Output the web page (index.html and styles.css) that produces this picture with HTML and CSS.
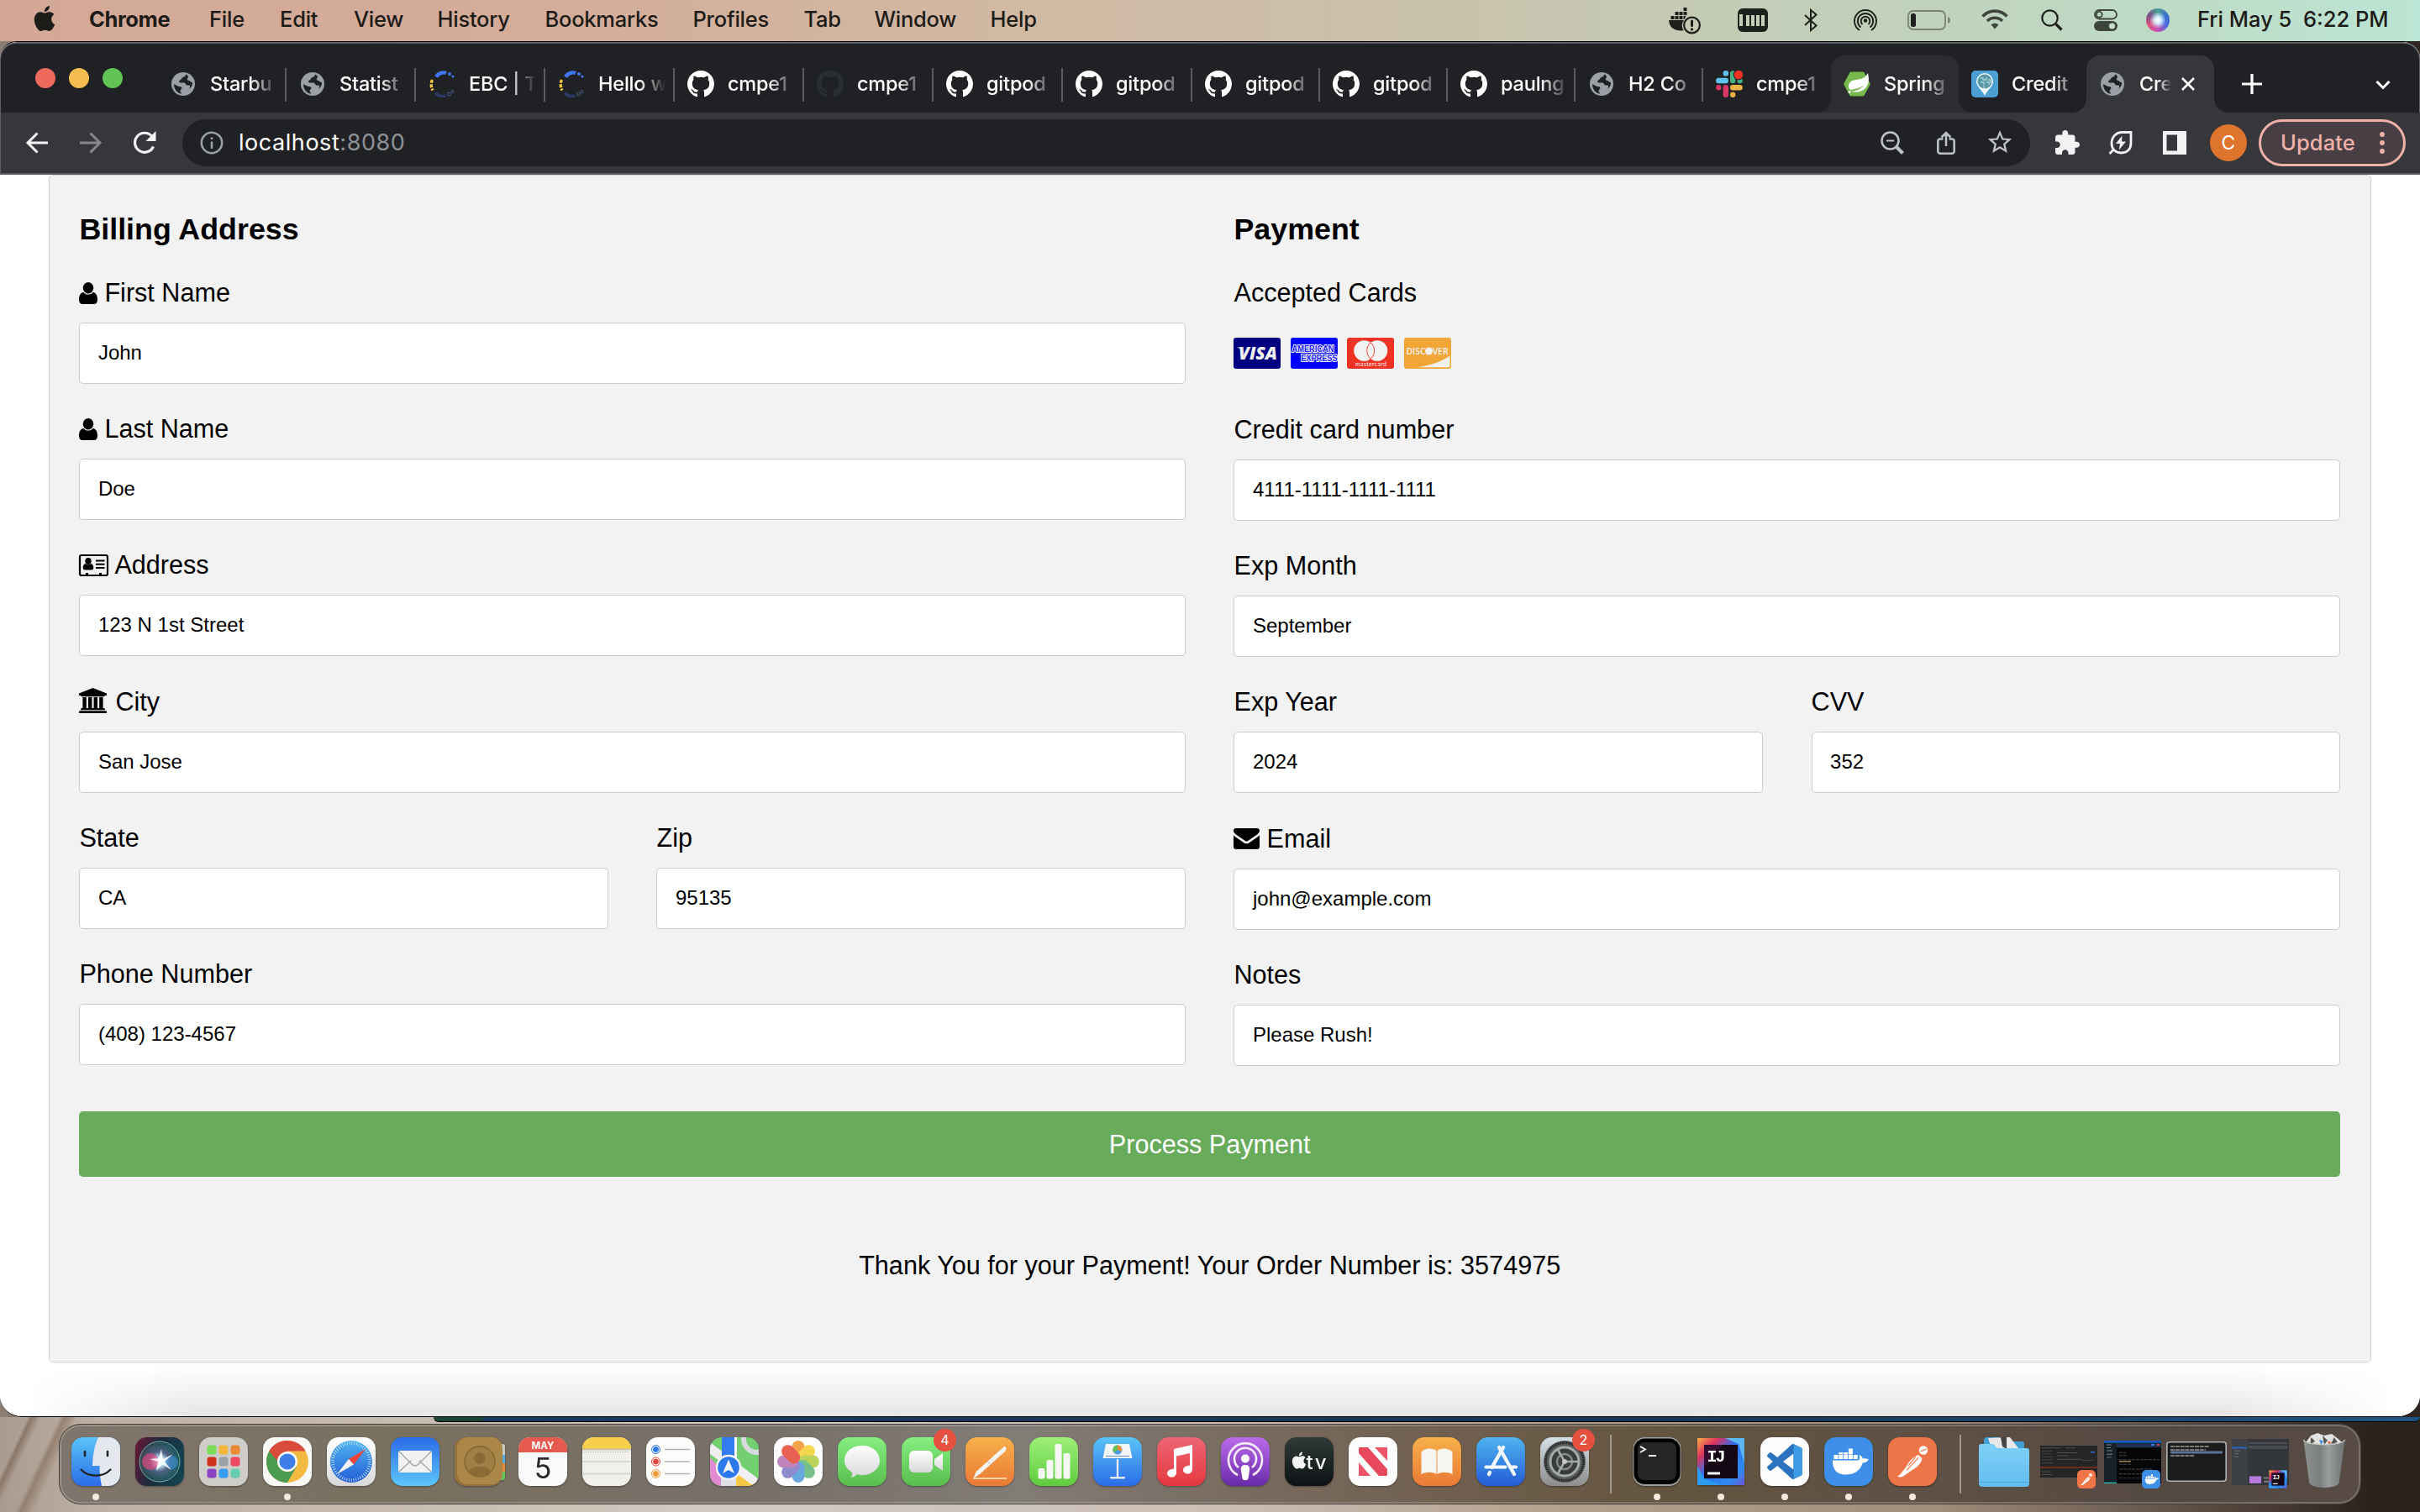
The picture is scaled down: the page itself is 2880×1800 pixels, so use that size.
FILE: index.html
```html
<!DOCTYPE html>
<html lang="en">
<head>
<meta charset="utf-8">
<title>Credit Card Payment</title>
<link rel="stylesheet" href="styles.css">
</head>
<body>
<svg class="defs" width="0" height="0" aria-hidden="true">
  <defs>
    <linearGradient id="g-blue" x1="0" y1="0" x2="0" y2="1"><stop offset="0" stop-color="#5ac4f8"/><stop offset="1" stop-color="#2a6be8"/></linearGradient>
    <linearGradient id="g-mail" x1="0" y1="0" x2="0" y2="1"><stop offset="0" stop-color="#2b6be8"/><stop offset="1" stop-color="#5cc6fa"/></linearGradient>
    <linearGradient id="g-white" x1="0" y1="0" x2="0" y2="1"><stop offset="0" stop-color="#fff"/><stop offset="1" stop-color="#d8d8da"/></linearGradient>
    <linearGradient id="g-green" x1="0" y1="0" x2="0" y2="1"><stop offset="0" stop-color="#86ee82"/><stop offset="1" stop-color="#58bd4d"/></linearGradient>
    <linearGradient id="g-lime" x1="0" y1="0" x2="0" y2="1"><stop offset="0" stop-color="#9df078"/><stop offset="1" stop-color="#5fcb3f"/></linearGradient>
    <linearGradient id="g-orange" x1="0" y1="0" x2="0" y2="1"><stop offset="0" stop-color="#f6b04a"/><stop offset="1" stop-color="#ea7a35"/></linearGradient>
    <linearGradient id="g-red" x1="0" y1="0" x2="0" y2="1"><stop offset="0" stop-color="#ee6675"/><stop offset="1" stop-color="#e5383f"/></linearGradient>
    <linearGradient id="g-purple" x1="0" y1="0" x2="0" y2="1"><stop offset="0" stop-color="#ba6bea"/><stop offset="1" stop-color="#692ba8"/></linearGradient>
    <linearGradient id="g-dark" x1="0" y1="0" x2="0" y2="1"><stop offset="0" stop-color="#2f3b38"/><stop offset="1" stop-color="#0d1113"/></linearGradient>
    <linearGradient id="g-store" x1="0" y1="0" x2="0" y2="1"><stop offset="0" stop-color="#4fb4f0"/><stop offset="1" stop-color="#235cd6"/></linearGradient>
    <linearGradient id="g-grey" x1="0" y1="0" x2="0" y2="1"><stop offset="0" stop-color="#d5e0e6"/><stop offset="1" stop-color="#8d8d8b"/></linearGradient>
    <linearGradient id="g-siri" x1="0" y1="0" x2="1" y2="0.3"><stop offset="0" stop-color="#6b1634"/><stop offset=".5" stop-color="#1d2b3e"/><stop offset="1" stop-color="#15404f"/></linearGradient>
    <radialGradient id="g-orb"><stop offset="0" stop-color="#fff"/><stop offset=".22" stop-color="#bfe6f5"/><stop offset=".5" stop-color="#5d6c92" stop-opacity=".8"/><stop offset="1" stop-color="#2e7f7a" stop-opacity=".35"/></radialGradient>
    <linearGradient id="g-ij" x1="0" y1="0" x2="1" y2="1"><stop offset="0" stop-color="#fdb04a"/><stop offset=".22" stop-color="#e0355c"/><stop offset=".45" stop-color="#2f6df0"/><stop offset=".8" stop-color="#2d8bf2"/><stop offset="1" stop-color="#6b57d6"/></linearGradient>
    <linearGradient id="g-folder" x1="0" y1="0" x2="0" y2="1"><stop offset="0" stop-color="#7fd0f7"/><stop offset="1" stop-color="#62bdee"/></linearGradient>
    <linearGradient id="g-bin" x1="0" y1="0" x2="1" y2="0"><stop offset="0" stop-color="#8f9392"/><stop offset=".4" stop-color="#7a7e7d"/><stop offset=".6" stop-color="#999d9c"/><stop offset="1" stop-color="#6e7270"/></linearGradient>
  </defs>
  <symbol id="github" viewBox="0 0 16 16"><path d="M8 0C3.58 0 0 3.58 0 8c0 3.54 2.29 6.53 5.47 7.59.4.07.55-.17.55-.38 0-.19-.01-.82-.01-1.49-2.01.37-2.53-.49-2.69-.94-.09-.23-.48-.94-.82-1.13-.28-.15-.68-.52-.01-.53.63-.01 1.08.58 1.23.82.72 1.21 1.87.87 2.33.66.07-.52.28-.87.51-1.07-1.78-.2-3.64-.89-3.64-3.95 0-.87.31-1.59.82-2.15-.08-.2-.36-1.02.08-2.12 0 0 .67-.21 2.2.82.64-.18 1.32-.27 2-.27.68 0 1.36.09 2 .27 1.53-1.04 2.2-.82 2.2-.82.44 1.1.16 1.92.08 2.12.51.56.82 1.27.82 2.15 0 3.07-1.87 3.75-3.65 3.95.29.25.54.73.54 1.48 0 1.07-.01 1.93-.01 2.2 0 .21.15.46.55.38A8.013 8.013 0 0 0 16 8c0-4.42-3.58-8-8-8z"/></symbol>
  <symbol id="globe" viewBox="0 0 32 32"><circle cx="16" cy="16" r="14" fill="#9aa0a6"/><path d="M19 4.5c-.3 2.6-1.2 3-3.4 3.4-1.8.4-1.5 3-3.2 3.6-2 .6-1.400 3 .4 3h4.400c1.600 0 1.600 2.600 3.200 2.900 1.600.3 3.400-.6 3.700 1.200.2 1.400-.6 2.700-1.700 3.600 3.400-2 5.100-5.400 4.600-8.200-2 .4-2.700-2-4.600-2.200-1.800-.2-2.200-1.800-1-2.800 1.100-1 .6-3.500-2.400-4.500z" fill="#202124"/><path d="M5 16.300l4.800 2.200c1.800.8 4.400.2 4.600 2.200.2 1.700-2.200 2-1.900 3.900.2 1.200 1.400 1.400 1.500 3-4.800-.6-9-5-9-11.300z" fill="#202124"/></symbol>
  <symbol id="ring" viewBox="0 0 32 32"><path d="M9 7.500C12 2.500 17.500 1.500 21 3" fill="none" stroke="#3f76f0" stroke-width="4.400"/><circle cx="25" cy="4" r="2" fill="#3f76f0"/><circle cx="29" cy="7" r="1.600" fill="#3f76f0"/><path d="M4.500 11C2.500 15 3 20 5 23.500" fill="none" stroke="#f2c53d" stroke-width="3.400" stroke-dasharray="4 1.400"/><path d="M8.500 26.500c3 4 8 5 12 3.500" fill="none" stroke="#2b3c66" stroke-width="4"/><circle cx="24.500" cy="28" r="2" fill="none" stroke="#4a5f8c"/><circle cx="28.500" cy="25" r="1.600" fill="none" stroke="#4a5f8c"/></symbol>
  <symbol id="apple" viewBox="0 0 24 24"><path d="M12.152 6.896c-.948 0-2.415-1.078-3.960-1.040-2.040.027-3.910 1.183-4.961 3.014-2.117 3.675-.546 9.103 1.519 12.090 1.013 1.454 2.208 3.090 3.792 3.039 1.520-.065 2.090-.987 3.935-.987 1.831 0 2.350.987 3.960.948 1.637-.026 2.676-1.480 3.676-2.948 1.156-1.688 1.636-3.325 1.662-3.415-.039-.013-3.182-1.221-3.220-4.857-.026-3.040 2.480-4.494 2.597-4.559-1.429-2.090-3.623-2.324-4.390-2.376-2-.156-3.675 1.090-4.610 1.090zM15.530 3.830c.843-1.012 1.400-2.427 1.245-3.830-1.207.052-2.662.805-3.532 1.818-.78.896-1.454 2.338-1.273 3.714 1.338.104 2.715-.688 3.559-1.701"/></symbol>
  <symbol id="user" viewBox="0 0 22 26"><ellipse cx="11" cy="6.800" rx="6.300" ry="6.800"/><path d="M5.200 12c1.600 1.700 3.600 2.600 5.800 2.600s4.200-.9 5.800-2.600c3.800.4 5.200 4.700 5.200 9 0 3-1.700 5-4.200 5H4.200C1.700 26 0 24 0 21c0-4.300 1.400-8.600 5.200-9z"/></symbol>
  <symbol id="docker" viewBox="0 0 58 58"><rect width="58" height="58" rx="14" fill="#3e8fe8"/><path d="M10 27.500h31c1.300-1 1.500-4.500.500-6.500 2.500.800 3.800 2.500 4.300 4.500 2.200-.600 5-.300 7 .800-1.500 3-4 4.200-7 4.200C42.500 40 36.500 44.500 25 44.500 15 44.500 9.500 38 10 27.500z" fill="#fff"/><g fill="#fff"><rect x="11.500" y="21" width="5" height="5"/><rect x="17.300" y="21" width="5" height="5"/><rect x="23.100" y="21" width="5" height="5"/><rect x="28.900" y="21" width="5" height="5"/><rect x="34.700" y="21" width="5" height="5"/><rect x="17.300" y="18" width="5" height="2.500"/><rect x="23.100" y="18" width="5" height="2.500"/><rect x="28.900" y="13.500" width="5" height="7"/></g></symbol>
  <symbol id="postman" viewBox="0 0 58 58"><rect width="58" height="58" rx="14" fill="#ee7548"/><circle cx="42" cy="15.500" r="5.200" fill="#fff"/><path d="M36 21l4.500 4c-1 6-5 10-11 13.500L18 46.500l-3 1-4-.5 4-3.500 7-9C25 28 30 23.500 36 21z" fill="#fff"/><path d="M38.500 17l7.500-3M36 24c-3 5-8 9-14 15M33 23c-3 4-6 7-9 11" stroke="#ee7548" stroke-width="1.200" fill="none"/></symbol>
  <symbol id="intellij" viewBox="0 0 58 58"><rect x="1" y="1" width="56" height="56" fill="url(#g-ij)"/><path d="M57 1v30L50 8 34 1z" fill="#5ab7f0"/><path d="M1 57V34l8 15 20 8z" fill="#2b9cf0"/><rect x="9" y="9" width="40" height="40" fill="#150613"/><path d="M9 9h22L9 36z" fill="#3a0f38" opacity=".8"/><text x="12.500" y="29" font-family="Liberation Mono" font-weight="700" font-size="20" fill="#fff" textLength="22">IJ</text><rect x="13" y="41.500" width="15" height="3" fill="#fff"/></symbol>
</svg>

<header class="menubar">
  <svg class="apple" viewBox="0 0 24 24"><use href="#apple"/></svg>
  <nav class="menus">
    <b>Chrome</b><span>File</span><span>Edit</span><span>View</span><span>History</span><span>Bookmarks</span><span>Profiles</span><span>Tab</span><span>Window</span><span>Help</span>
  </nav>
  <div class="status">
    <svg class="s-docker" viewBox="0 0 38 32" fill="#1e201b"><path d="M0 15h18c-3 4-3 9 0 12.300C7 28 1 25 0 15z"/><path d="M2.500 10h4v4h-4zM7.500 10h4v4h-4zM12.500 10h4v4h-4zM7.500 5h4v4h-4zM12.500 5h4v4h-4zM17.500 5h4v4h-4zM17.500 0h4v4h-4zM17.500 10h3l-2 4h-1z"/><circle cx="27.500" cy="21" r="9.400" fill="none" stroke="#1e201b" stroke-width="2.200"/><rect x="26" y="14.500" width="3" height="8.500" rx="1.500"/><circle cx="27.500" cy="26" r="1.700"/></svg>
    <svg class="s-mem" viewBox="0 0 36 28"><rect width="36" height="28" rx="6" fill="#1e201b"/><path d="M2 7h4v14H2zM10 8h4v13h-4zM16 8h4v13h-4zM22 8h4v13h-4zM28 8h4v13h-4z" fill="#c3cfb9"/></svg>
    <svg class="s-bt" viewBox="0 0 16 26" fill="none" stroke="#1e201b" stroke-width="2"><path d="M1 7l13.500 12.500L8 25V1l6.500 5.500L1 19"/></svg>
    <svg class="s-air" viewBox="0 0 28 28" fill="none" stroke="#1e201b" stroke-width="1.900"><circle cx="14" cy="14.500" r="2.300" fill="#1e201b" stroke="none"/><path d="M10.500 19a5.300 5.300 0 1 1 7 0M8.500 22.500a9.200 9.200 0 1 1 11 0M7 26a13 13 0 1 1 14 0"/></svg>
    <svg class="s-bat" viewBox="0 0 52 24"><rect x="1" y="1" width="44" height="22" rx="6" fill="none" stroke="#7b8576" stroke-width="1.800"/><rect x="4" y="4" width="6" height="16" rx="2.500" fill="#1e201b"/><path d="M48 8c4 1.500 4 6.500 0 8z" fill="#7b8576"/></svg>
    <svg class="s-wifi" viewBox="0 0 32 24" fill="none" stroke="#3e453d" stroke-width="3.600"><path d="M1.500 8.500C9.500 0 22.500 0 30.500 8.500M7 14c5-5 13-5 18 0"/><path d="M11.500 18.500c2.500-2.400 6.500-2.400 9 0L16 23.500z" fill="#3e453d" stroke="none"/></svg>
    <svg class="s-find" viewBox="0 0 26 26" fill="none" stroke="#1e201b"><circle cx="10.500" cy="10.500" r="9.200" stroke-width="2.200"/><path d="M17.500 17.500l7 7" stroke-width="3.200"/></svg>
    <svg class="s-cc" viewBox="0 0 28 26"><rect x="1" y="1" width="26" height="10.500" rx="5.200" fill="none" stroke="#3e453d" stroke-width="1.800"/><circle cx="6.300" cy="6.200" r="3.400" fill="none" stroke="#3e453d" stroke-width="1.800"/><rect y="14" width="28" height="12" rx="6" fill="#3e453d"/><circle cx="21.500" cy="20" r="3.600" fill="#bfdcc6"/></svg>
    <span class="s-siri"></span>
    <span class="clock">Fri May 5&nbsp; 6:22 PM</span>
  </div>
</header>

<main class="window">
  <div class="tabstrip">
    <div class="lights"><i class="red"></i><i class="yellow"></i><i class="green"></i></div>
    <div class="tabs">
      <div class="tab"><svg><use href="#globe"/></svg><span>Starbu</span></div>
      <div class="tab"><svg><use href="#globe"/></svg><span>Statist</span></div>
      <div class="tab"><svg><use href="#ring"/></svg><span>EBC | T</span></div>
      <div class="tab"><svg><use href="#ring"/></svg><span>Hello w</span></div>
      <div class="tab"><svg><use href="#github"/></svg><span>cmpe1</span></div>
      <div class="tab dim"><svg><use href="#github"/></svg><span>cmpe1</span></div>
      <div class="tab"><svg><use href="#github"/></svg><span>gitpod</span></div>
      <div class="tab"><svg><use href="#github"/></svg><span>gitpod</span></div>
      <div class="tab"><svg><use href="#github"/></svg><span>gitpod</span></div>
      <div class="tab"><svg><use href="#github"/></svg><span>gitpod</span></div>
      <div class="tab"><svg><use href="#github"/></svg><span>paulng</span></div>
      <div class="tab"><svg><use href="#globe"/></svg><span>H2 Co</span></div>
      <div class="tab plain"><svg viewBox="0 0 32 32"><g stroke-linecap="round" stroke-width="6.400"><path d="M3.300 12h8.500" stroke="#5fc3ee"/><path d="M11.800 3.300v.1" stroke="#5fc3ee"/><path d="M20.200 3.500v8.500M28.600 12v.1" stroke="#45b183"/><path d="M3.300 20.200v.1M11.800 20.200v8.500" stroke="#d63865"/><path d="M20.200 20.200h8.400M20.200 28.600v.1" stroke="#eab344"/></g><circle cx="27" cy="5" r="6.300" fill="#202124"/><circle cx="27" cy="5" r="5.200" fill="#ee3324"/></svg><span>cmpe1</span></div>
      <div class="tab hover"><svg viewBox="0 0 32 32"><path d="M9 1.500h14a2 2 0 0 1 1.700 1L31.500 15a2 2 0 0 1 0 2l-6.800 12.500a2 2 0 0 1-1.700 1H9a2 2 0 0 1-1.700-1L.5 17a2 2 0 0 1 0-2L7.300 2.500a2 2 0 0 1 1.700-1z" fill="#77b84f"/><path d="M29 3c1.800 8 1 14-3.500 18.500C20 27 12 25.500 7.500 25c8-.5 13.500-3 17-8C19 21.500 13 22 8 23 4 19 6 13 12 11.500 18 10 25 11 29 3z" fill="#fff"/><circle cx="7" cy="25.500" r="1.500" fill="#fff"/></svg><span>Spring</span></div>
      <div class="tab plain"><svg viewBox="0 0 32 32"><rect width="32" height="32" rx="5" fill="#4c9fd2"/><path d="M16 3a10 10 0 0 1 10 10c0 6-7 10-10 17C13 23 6 19 6 13A10 10 0 0 1 16 3z" fill="#f2fafc"/><circle cx="16" cy="13" r="8.500" fill="#5a9aa8"/><path d="M11 9h3v2h4V8m2 3h3v4m-12-1h4v3m3-3h3v3m-6 1v3" fill="none" stroke="#a7d3d6" stroke-width="1.300"/></svg><span>Credit</span></div>
      <div class="tab active"><svg><use href="#globe"/></svg><span>Cre</span><svg class="x" viewBox="0 0 16 16"><path d="M1 1l14 14M15 1L1 15" stroke="#fff" stroke-width="2.600"/></svg></div>
    </div>
    <svg class="plus" viewBox="0 0 24 24"><path d="M12 0v24M0 12h24" stroke="#fff" stroke-width="3.200"/></svg>
    <svg class="chev" viewBox="0 0 18 12"><path d="M1.500 2L9 9.500 16.500 2" fill="none" stroke="#fff" stroke-width="3"/></svg>
  </div>

  <div class="toolbar">
    <svg class="t-back" viewBox="0 0 26 26" fill="none" stroke="#f1f3f4" stroke-width="3"><path d="M26 13H2M13.500 1.500L2 13l11.500 11.500"/></svg>
    <svg class="t-fwd" viewBox="0 0 26 26" fill="none" stroke="#85878a" stroke-width="3"><path d="M0 13h24M12.500 1.500L24 13 12.500 24.500"/></svg>
    <svg class="t-reload" viewBox="0 0 28 28"><path d="M24.500 18.500A11.500 11.500 0 1 1 22.500 6" fill="none" stroke="#f1f3f4" stroke-width="3.200"/><path d="M27.500 0v12h-12z" fill="#f1f3f4"/></svg>
    <div class="omnibox">
      <svg class="o-info" viewBox="0 0 28 28"><circle cx="14" cy="14" r="12.200" fill="none" stroke="#9aa0a6" stroke-width="2.600"/><path d="M12.700 12.500h2.600V21h-2.600zM12.700 7.500h2.600v2.600h-2.600z" fill="#9aa0a6"/></svg>
      <span class="url">localhost<em>:8080</em></span>
      <svg class="o-zoom" viewBox="0 0 28 28" fill="none" stroke="#bdc1c6"><circle cx="11.500" cy="11.500" r="10" stroke-width="2.600"/><path d="M19 19l7.500 7.500" stroke-width="4"/><path d="M7 11.500h9" stroke-width="2"/></svg>
      <svg class="o-share" viewBox="0 0 22 28" fill="none" stroke="#bdc1c6" stroke-width="2.600"><path d="M7.500 9.500H4a2.700 2.700 0 0 0-2.700 2.500v12A2.700 2.700 0 0 0 4 26.700h14a2.700 2.700 0 0 0 2.700-2.700V12A2.700 2.700 0 0 0 18 9.500h-3.500M11 18V2.500M5.500 7.500L11 2l5.500 5.500"/></svg>
      <svg class="o-star" viewBox="1.500 1.500 21 20" fill="#bdc1c6"><path d="M22 9.240l-7.190-.620L12 2 9.190 8.630 2 9.240l5.460 4.730L5.820 21 12 17.270 18.180 21l-1.630-7.030L22 9.240zM12 15.400l-3.760 2.270 1-4.280-3.320-2.880 4.380-.380L12 6.100l1.710 4.040 4.380.380-3.320 2.880 1 4.280L12 15.400z"/></svg>
    </div>
    <svg class="t-ext" viewBox="2 1 21 21" fill="#f1f3f4"><path d="M20.500 11H19V7c0-1.100-.9-2-2-2h-4V3.500C13 2.120 11.880 1 10.500 1S8 2.120 8 3.500V5H4c-1.100 0-1.990.9-1.990 2v3.800H3.500c1.490 0 2.700 1.210 2.700 2.700s-1.210 2.700-2.700 2.700H2V20c0 1.100.9 2 2 2h3.800v-1.500c0-1.490 1.210-2.700 2.700-2.700 1.490 0 2.700 1.210 2.700 2.700V22H17c1.100 0 2-.9 2-2v-4h1.500c1.380 0 2.500-1.120 2.500-2.500S21.880 11 20.500 11z"/></svg>
    <svg class="t-leaf" viewBox="0 0 28 28" fill="none" stroke="#f1f3f4" stroke-width="2.800"><path d="M26.500 1.500v13c0 7-4.500 11.500-11.500 11.500S3.500 21.500 3.500 14.500 8.500 1.500 16 1.500zM1 27l5.500-5.500"/><path d="M16 5.500L8.500 15h5l-1.200 7.500L20.500 12.500h-5z" fill="#f1f3f4" stroke="none"/></svg>
    <svg class="t-panel" viewBox="0 0 28 28"><path d="M0 0h28v28H0zM4.500 4.500v19H17v-19z" fill="#f1f3f4" fill-rule="evenodd"/></svg>
    <span class="avatar">C</span>
    <span class="update">Update<svg viewBox="0 0 6 26"><circle cx="3" cy="3" r="2.900"/><circle cx="3" cy="13" r="2.900"/><circle cx="3" cy="23" r="2.900"/></svg></span>
  </div>

  <div class="page">
    <form class="container">
      <div class="row">
        <section class="col">
          <h3>Billing Address</h3>
          <div class="group"><label><svg class="i-user"><use href="#user"/></svg>First Name</label><div class="input">John</div></div>
          <div class="group"><label><svg class="i-user"><use href="#user"/></svg>Last Name</label><div class="input">Doe</div></div>
          <div class="group"><label><svg class="i-card" viewBox="0 0 35 26"><rect x="1" y="1" width="33" height="24" rx="2" fill="none" stroke="#000" stroke-width="2.200"/><ellipse cx="11" cy="8" rx="3.700" ry="4"/><path d="M7.500 11c2.200 1.800 4.800 1.800 7 0 2 .7 2.800 2.800 2.800 5 0 1.600-.9 2.500-2.400 2.500H7.100c-1.500 0-2.400-.9-2.400-2.500 0-2.200.8-4.300 2.800-5zM20 6.500h10.500v2H20zM20 10.800h10.500v2H20zM20 15h10.500v2H20zM8 22h3v3H8zM24 22h3v3h-3z"/></svg>Address</label><div class="input">123 N 1st Street</div></div>
          <div class="group"><label><svg class="i-bank" viewBox="0 0 33 30"><path d="M16.500 0L33 6.500V9h-2.200c0 .7-.5 1.200-1.200 1.200H3.400c-.7 0-1.200-.5-1.200-1.200H0V6.500zM4.400 11h4.400v13h2.200V11h4.400v13h2.200V11H22v13h2.200V11h4.400v13h1c.7 0 1.200.5 1.200 1.200v1H2.200v-1c0-.7.5-1.200 1.200-1.200h1zM1.200 27.300h30.600c.7 0 1.200.5 1.200 1.200V30H0v-1.500c0-.7.5-1.200 1.200-1.200z"/></svg>City</label><div class="input">San Jose</div></div>
          <div class="pair">
            <div class="group"><label>State</label><div class="input">CA</div></div>
            <div class="group"><label>Zip</label><div class="input">95135</div></div>
          </div>
          <div class="group"><label>Phone Number</label><div class="input">(408) 123-4567</div></div>
        </section>
        <section class="col">
          <h3>Payment</h3>
          <div class="accepted">
            <label>Accepted Cards</label>
            <div class="cards">
              <svg viewBox="0 0 56 37"><rect width="56" height="37" rx="3" fill="#000080"/><path d="M4 11.500h5l4 9-2-6z" fill="#f2f2f2"/><text x="6" y="26" font-family="Open Sans" font-weight="800" font-style="italic" font-size="20.500" fill="#f2f2f2" textLength="46" lengthAdjust="spacingAndGlyphs">VISA</text></svg>
              <svg viewBox="0 0 56 37"><rect width="56" height="37" rx="3" fill="#0000ff"/><g font-family="Liberation Sans" font-weight="700" font-size="10.500" fill="#1a1aff" stroke="#f2f2f2" stroke-width="2.200" paint-order="stroke"><text x="1.500" y="16.800" textLength="50" lengthAdjust="spacingAndGlyphs">AMERICAN</text><text x="12.500" y="28" textLength="43" lengthAdjust="spacingAndGlyphs">EXPRESS</text></g></svg>
              <svg viewBox="0 0 56 37"><rect width="56" height="37" rx="3" fill="#ee3224"/><circle cx="20.500" cy="15.500" r="12.300" fill="#f2f2f2"/><circle cx="36" cy="15.500" r="12.300" fill="#f2f2f2"/><path d="M28.200 6a12.300 12.300 0 0 0 0 19 12.300 12.300 0 0 0 0-19z" fill="#f2f2f2" stroke="#ee3224" stroke-width=".9"/><text x="10" y="34" font-family="Lato" font-size="7" fill="#f2f2f2" textLength="37">mastercard</text></svg>
              <svg viewBox="0 0 56 37"><rect width="56" height="37" rx="3" fill="#f2a638"/><text x="2.500" y="20" font-family="Open Sans" font-weight="600" font-size="11" fill="#f2f2f2" textLength="50" lengthAdjust="spacingAndGlyphs">DISCOVER</text><circle cx="29.500" cy="16" r="4.500" fill="#f2f2f2"/><path d="M54.500 21.500v12a1.700 1.700 0 0 1-1.700 1.700H16C32 33 46 28 54.500 21.500z" fill="#f2f2f2"/></svg>
            </div>
          </div>
          <div class="group"><label>Credit card number</label><div class="input">4111-1111-1111-1111</div></div>
          <div class="group"><label>Exp Month</label><div class="input">September</div></div>
          <div class="pair">
            <div class="group"><label>Exp Year</label><div class="input">2024</div></div>
            <div class="group"><label>CVV</label><div class="input">352</div></div>
          </div>
          <div class="group"><label><svg class="i-mail" viewBox="0 0 31 25"><path d="M3 0h25c1.700 0 3 1.200 3 2.800 0 2-1.500 3.700-3 4.700l-9 6.300c-1.200.8-2.300 1.800-3.500 1.800s-2.300-1-3.500-1.800L3 7.500C1.600 6.500 0 4.600 0 3 0 1.300 1.200 0 3 0z"/><path d="M0 8.300c.5.600 1.100 1.100 1.800 1.600l9.400 6.500c1.400 1 2.700 1.900 4.300 1.900s2.900-.9 4.300-1.900l9.400-6.500c.7-.5 1.300-1 1.800-1.600V22c0 1.700-1.300 3-3 3H3c-1.700 0-3-1.300-3-3z"/></svg>Email</label><div class="input">john@example.com</div></div>
          <div class="group"><label>Notes</label><div class="input">Please Rush!</div></div>
        </section>
      </div>
      <button type="button" class="btn">Process Payment</button>
      <p class="message">Thank You for your Payment! Your Order Number is: 3574975</p>
    </form>
  </div>
</main>

<footer class="desk">
  <div class="behind"></div>
  <div class="dock">
    <div class="app on"><svg viewBox="0 0 58 58"><rect width="58" height="58" rx="14" fill="url(#g-blue)"/><path d="M32 0h12a14 14 0 0 1 14 14v30a14 14 0 0 1-14 14h-8c-1.500-7-2.500-15-2.500-24H25C25.500 20 28 8 32 0z" fill="#e4e8ee"/><path d="M16 17v5M43 17v5" stroke="#222" stroke-width="2.600" stroke-linecap="round"/><path d="M11.500 38.500c9 9.500 26 9.500 35 0" stroke="#222" stroke-width="2.200" fill="none" stroke-linecap="round"/></svg></div>
    <div class="app"><svg viewBox="0 0 58 58"><rect width="58" height="58" rx="14" fill="url(#g-siri)"/><circle cx="29" cy="29" r="24" fill="url(#g-orb)" stroke="#6fae9f" stroke-width="1"/><circle cx="18" cy="29" r="10" fill="#e8487f" opacity=".65"/><circle cx="43" cy="30" r="8" fill="#3b9be0" opacity=".55"/><path d="M31 14l2 12 12-6-10 9 8 10-11-7-7 8 2-11-10-3 11-1z" fill="#fff" opacity=".85"/></svg></div>
    <div class="app"><svg viewBox="0 0 58 58"><rect width="58" height="58" rx="14" fill="#cfcdca"/><rect x="9.500" y="9.500" width="11" height="11" rx="3" fill="#7bdc57"/><rect x="23.500" y="9.500" width="11" height="11" rx="3" fill="#f2b93c"/><rect x="37.500" y="9.500" width="11" height="11" rx="3" fill="#ea8b34"/><rect x="9.500" y="23.500" width="11" height="11" rx="3" fill="#d0311f"/><rect x="23.500" y="23.500" width="11" height="11" rx="3" fill="#9aa2a5"/><rect x="37.500" y="23.500" width="11" height="11" rx="3" fill="#ee4760"/><rect x="9.500" y="37.500" width="11" height="11" rx="3" fill="#8a45c2"/><rect x="23.500" y="37.500" width="11" height="11" rx="3" fill="#389cf0"/><rect x="37.500" y="37.500" width="11" height="11" rx="3" fill="#66cdb0"/></svg></div>
    <div class="app on"><svg viewBox="0 0 58 58"><rect width="58" height="58" rx="14" fill="#f8f8f7"/><circle cx="29" cy="29" r="25" fill="#f3ba42"/><path d="M7.350 16.500A25 25 0 0 1 50.650 16.500H29z" fill="#d84b3d"/><path d="M7.350 16.500A25 25 0 0 0 29 54l11-19L18.500 35z" fill="#4b9b52"/><path d="M7.350 16.500L18.200 35.300 29 29V16.500z" fill="#4b9b52"/><path d="M7.350 16.500A25 25 0 0 1 29 4v12.500L18 29z" fill="#d84b3d"/><circle cx="29" cy="29" r="12" fill="#fff"/><circle cx="29" cy="29" r="9.600" fill="#3f7de8"/></svg></div>
    <div class="app"><svg viewBox="0 0 58 58"><rect width="58" height="58" rx="14" fill="url(#g-white)"/><circle cx="29" cy="29" r="25" fill="url(#g-store)"/><circle cx="29" cy="29" r="22" fill="none" stroke="#cfe6fb" stroke-width="3.600" stroke-dasharray=".8 2"/><path d="M46 14L32 32.500 26 26z" fill="#ef4538"/><path d="M12 44L26 26l6 6.500z" fill="#f3f3f3"/></svg></div>
    <div class="app"><svg viewBox="0 0 58 58"><rect width="58" height="58" rx="14" fill="url(#g-mail)"/><rect x="9" y="16" width="40" height="26" rx="3" fill="#f1f1f1"/><path d="M10 41l14-13M48 41L34 28M10 17l15 15c2.500 2.500 5.500 2.500 8 0l15-15" fill="none" stroke="#a5a5a5" stroke-width="1.300"/></svg></div>
    <div class="app"><svg viewBox="0 0 58 58"><path d="M52 8h5a3 3 0 0 1 3 3v10h-8z" fill="#c9c9c6"/><path d="M52 21h8v10h-8z" fill="#4fa9e0"/><path d="M52 31h8v10h-8z" fill="#e78a33"/><path d="M52 41h8v7a3 3 0 0 1-3 3h-5z" fill="#63c65a"/><rect width="56" height="58" rx="13" fill="#93713b"/><rect x="3" width="54" height="56" rx="13" fill="#aa8749"/><circle cx="30" cy="29" r="18" fill="#a17f44" stroke="#84642f" stroke-width="1.300"/><ellipse cx="30" cy="25" rx="6.500" ry="7" fill="#8b6a35"/><path d="M17 41c2-8 24-8 26 0-6 7-20 7-26 0z" fill="#8b6a35"/></svg></div>
    <div class="app"><svg viewBox="0 0 58 58"><rect width="58" height="58" rx="14" fill="#fafafa"/><path d="M14 0h30a14 14 0 0 1 14 14v4H0v-4A14 14 0 0 1 14 0z" fill="#e5594e"/><text x="29" y="13.500" text-anchor="middle" font-family="Inter" font-weight="700" font-size="11.500" fill="#fff">MAY</text><text x="29" y="48.500" text-anchor="middle" font-family="Inter" font-size="34" fill="#2a2a2a">5</text></svg></div>
    <div class="app"><svg viewBox="0 0 58 58"><rect width="58" height="58" rx="14" fill="#f1f0ec"/><path d="M14 0h30a14 14 0 0 1 14 14H0A14 14 0 0 1 14 0z" fill="#f7cf4a"/><path d="M0 14.500h58" stroke="#bdbab2" stroke-width="1.400"/><path d="M1 17.500h56" stroke="#b9b6b0" stroke-width="1.200" stroke-dasharray="1 1"/><path d="M0 29h58M0 43.500h58" stroke="#d0d0d2" stroke-width="1.300"/></svg></div>
    <div class="app"><svg viewBox="0 0 58 58"><rect width="58" height="58" rx="14" fill="#fcfcfb"/><path d="M22 14.500h30M22 29h30M22 43.500h30" stroke="#b4b4b6" stroke-width="1.300"/><g stroke="#fff" stroke-width="1"><circle cx="11.500" cy="14.500" r="4" fill="#2d78ea"/><circle cx="11.500" cy="29" r="4" fill="#e5483e"/><circle cx="11.500" cy="43.500" r="4" fill="#ef9a37"/></g><g fill="none" stroke-width="1"><circle cx="11.500" cy="14.500" r="5" stroke="#2d78ea"/><circle cx="11.500" cy="29" r="5" stroke="#e5483e"/><circle cx="11.500" cy="43.500" r="5" stroke="#ef9a37"/></g></svg></div>
    <div class="app"><svg viewBox="0 0 58 58"><clipPath id="c-map"><rect width="58" height="58" rx="14"/></clipPath><g clip-path="url(#c-map)"><rect width="58" height="58" fill="#74cf71"/><path d="M0 24l32 34H0z" fill="#e08bd0"/><path d="M30 30l28 24v4H28z" fill="#f5c945"/><path d="M0 6l58 44v8h-6L0 20z" fill="#f0f0f2"/><rect x="13" y="30" width="18" height="28" fill="#dfe0e6"/><rect x="14" width="15" height="30" fill="#347df0"/><path d="M29 0h3v28h-3z" fill="#fff"/><circle cx="56" cy="2" r="16" fill="none" stroke="#d9dade" stroke-width="6"/></g><circle cx="22" cy="36" r="14" fill="#2d78ea" stroke="#f3f3f5" stroke-width="2.400"/><path d="M22 26.500l7 16.500-7-4-7 4z" fill="#f3f3f5"/></svg></div>
    <div class="app"><svg viewBox="0 0 58 58"><rect width="58" height="58" rx="14" fill="#fdfdfd"/><g opacity=".9"><rect x="21.500" y="4" width="15" height="25" rx="7.500" fill="#f19a37"/><rect x="21.500" y="4" width="15" height="25" rx="7.500" fill="#f4d23c" transform="rotate(45 29 29)"/><rect x="21.500" y="4" width="15" height="25" rx="7.500" fill="#b5cf4a" transform="rotate(90 29 29)"/><rect x="21.500" y="4" width="15" height="25" rx="7.500" fill="#69ba7e" transform="rotate(135 29 29)"/><rect x="21.500" y="4" width="15" height="25" rx="7.500" fill="#5a9fdc" transform="rotate(180 29 29)"/><rect x="21.500" y="4" width="15" height="25" rx="7.500" fill="#8080c8" transform="rotate(225 29 29)"/><rect x="21.500" y="4" width="15" height="25" rx="7.500" fill="#b877b4" transform="rotate(270 29 29)"/><rect x="21.500" y="4" width="15" height="25" rx="7.500" fill="#e6503f" transform="rotate(315 29 29)"/></g></svg></div>
    <div class="app"><svg viewBox="0 0 58 58"><rect width="58" height="58" rx="14" fill="url(#g-green)"/><path d="M29 10c12 0 21 7.500 21 17.500S41 45 29 45c-2.500 0-4.500-.3-6.500-.8-1.500 2-3.500 3.300-7 3.800 1.500-2 2-4 1.500-6.200C11.500 38.500 8 33.500 8 27.500 8 17.500 17 10 29 10z" fill="url(#g-white)"/></svg></div>
    <div class="app"><svg viewBox="0 0 58 58"><rect width="58" height="58" rx="14" fill="url(#g-green)"/><rect x="9" y="16" width="28" height="26" rx="6" fill="url(#g-white)"/><path d="M39 26l10-7v21l-10-7z" fill="url(#g-white)"/></svg><span class="badge">4</span></div>
    <div class="app"><svg viewBox="0 0 58 58"><rect width="58" height="58" rx="14" fill="url(#g-orange)"/><path d="M9 49h40" stroke="#fbd3a5" stroke-width="2"/><path d="M46 11c3 0 3 3 1.500 5.500L17 44l-7.500 5 3-8z" fill="#f5f3f0"/><path d="M26 29l5 4" stroke="#c9b8a8" stroke-width="1"/></svg></div>
    <div class="app"><svg viewBox="0 0 58 58"><rect width="58" height="58" rx="14" fill="url(#g-lime)"/><g fill="#f6f7f5"><rect x="10.500" y="37" width="8" height="12.500" rx="2"/><rect x="20.500" y="27" width="8" height="22.500" rx="2"/><rect x="30.500" y="8" width="8" height="41.500" rx="2"/><rect x="40.500" y="19" width="8" height="30.500" rx="2"/></g></svg></div>
    <div class="app"><svg viewBox="0 0 58 58"><rect width="58" height="58" rx="14" fill="url(#g-blue)"/><path d="M15 8h28l3.500 17h-35z" fill="#f4f5f7"/><path d="M15 22.500h28" stroke="#7c9cc8" stroke-width="1.200"/><circle cx="29" cy="15" r="5.500" fill="#4f9de6"/><path d="M29 15V9.500a5.500 5.500 0 0 1 5 7.500z" fill="#ef8b3b"/><path d="M29 15l-4.500 3.500A5.500 5.500 0 0 1 29 9.500z" fill="#62bf5a"/><path d="M27.800 26h2.400v21h-2.400z" fill="#e4e7ec"/><rect x="20" y="47" width="18" height="2.600" rx="1" fill="#e4e7ec"/></svg></div>
    <div class="app"><svg viewBox="0 0 58 58"><rect width="58" height="58" rx="14" fill="url(#g-red)"/><path d="M20 14l22-5v29c0 3.500-2.500 5.500-5.500 5.500S31 41.500 31 39s2-4.500 5-5l3-.6V19l-16 3.500V42c0 3.500-2.500 5.500-5.500 5.500S12 45.500 12 43s2-4.500 5-5l3-.6z" fill="#fff"/></svg></div>
    <div class="app"><svg viewBox="0 0 58 58"><rect width="58" height="58" rx="14" fill="url(#g-purple)"/><g fill="none" stroke="#f4eafa" stroke-width="2.600"><path d="M20 45a20 20 0 1 1 18 0M21 36a13 13 0 1 1 16 0"/></g><circle cx="29" cy="25.500" r="5" fill="#fff"/><path d="M29 33c5 0 5.500 3 5 7l-1.500 9c-.7 3-6.300 3-7 0L24 40c-.5-4 0-7 5-7z" fill="#fff"/></svg></div>
    <div class="app"><svg viewBox="0 0 58 58"><rect width="58" height="58" rx="14" fill="url(#g-dark)"/><use href="#apple" x="7" y="17" width="20" height="21" fill="#f3f3f3"/><text x="25.500" y="38" font-family="Inter" font-weight="500" font-size="24" fill="#f3f3f3" textLength="24">tv</text></svg></div>
    <div class="app"><svg viewBox="0 0 58 58"><rect width="58" height="58" rx="14" fill="#fefefe"/><path d="M12 14c0-1.500.5-2 2-2h9l23 26v6c0 1.500-.5 2-2 2h-8L12 19z" fill="#e8485c"/><path d="M31 12h15v16zM12 30l14 16H12z" fill="#ee5568"/></svg></div>
    <div class="app"><svg viewBox="0 0 58 58"><rect width="58" height="58" rx="14" fill="url(#g-orange)"/><path d="M28.500 16v28c-4-3-13-3-18 0V18c3-5.500 14-6 18-2zM29.500 16v28c4-3 13-3 18 0V18c-3-5.500-14-6-18-2z" fill="#f7f5f2"/></svg></div>
    <div class="app"><svg viewBox="0 0 58 58"><rect width="58" height="58" rx="14" fill="url(#g-store)"/><g stroke="#f3f8fd" stroke-width="4.200" stroke-linecap="round"><path d="M32 12L18.500 36M27 12l18 32M11.500 35.500h23M42 35.500h5M16 42l-1 2"/></g></svg></div>
    <div class="app"><svg viewBox="0 0 58 58"><rect width="58" height="58" rx="14" fill="url(#g-grey)"/><circle cx="29" cy="29" r="25" fill="#5b5d5e"/><circle cx="29" cy="29" r="22.500" fill="none" stroke="#1f2122" stroke-width="3" stroke-dasharray="1.500 1"/><circle cx="29" cy="29" r="17" fill="#3a3c3d" stroke="#a7aaab" stroke-width="3"/><circle cx="29" cy="29" r="9" fill="none" stroke="#85888a" stroke-width="2.500"/><path d="M29 29h17M29 29l-8.500-15M29 29l-8.500 15" stroke="#a7aaab" stroke-width="2.600"/><circle cx="29" cy="29" r="3" fill="#c2c4c5"/></svg><span class="badge">2</span></div>
    <i class="rule r1"></i>
    <div class="app on"><svg viewBox="0 0 58 58"><rect x=".5" width="57" height="58" rx="14" fill="#9aa1a3"/><rect x="1.500" y="1.500" width="55" height="54.500" rx="13" fill="#000"/><rect x="6" y="6" width="46" height="45" rx="8" fill="#262626"/><path d="M9 11l6 3.500L9 18" fill="none" stroke="#fff" stroke-width="1.800"/><path d="M19 22h9" stroke="#fff" stroke-width="1.800"/></svg></div>
    <div class="app on"><svg viewBox="0 0 58 58"><use href="#intellij"/></svg></div>
    <div class="app on"><svg viewBox="0 0 58 58"><rect width="58" height="58" rx="14" fill="#fdfdfd"/><svg x="8" y="8" width="42" height="42" viewBox="0 0 24 24"><path d="M23.150 2.587L18.210.210a1.494 1.494 0 0 0-1.705.290l-9.460 8.630-4.120-3.128a.999.999 0 0 0-1.276.057L.327 7.261A1 1 0 0 0 .326 8.740L3.899 12 .326 15.260a1 1 0 0 0 .001 1.479L1.650 17.940a.999.999 0 0 0 1.276.057l4.120-3.128 9.460 8.630a1.492 1.492 0 0 0 1.704.290l4.942-2.377A1.500 1.500 0 0 0 24 20.060V3.939a1.500 1.500 0 0 0-.850-1.352zm-5.146 14.861L10.826 12l7.178-5.448v10.896z" fill="#2a73be"/><path d="M18 .1l5.150 2.487A1.500 1.500 0 0 1 24 3.939V20.060a1.500 1.500 0 0 1-.850 1.352L18 23.900z" fill="#3f9ae5"/></svg></svg></div>
    <div class="app on"><svg viewBox="0 0 58 58"><use href="#docker"/></svg></div>
    <div class="app on"><svg viewBox="0 0 58 58"><use href="#postman"/></svg></div>
    <i class="rule r2"></i>
    <svg class="folder" viewBox="0 0 60 60"><path d="M6 6c0-3 1-5 4-5h14l5 5h22c2 0 3 1 3 3v20H6z" fill="#3f9fd6"/><path d="M11 2l26-1 10 13H15z" fill="#e8e8e8"/><path d="M26 1h7v14l-5-3z" fill="#444"/><path d="M3 9h13c3 0 4 5 7 5h34a3 3 0 0 1 3 3v39a4 4 0 0 1-4 4H4a4 4 0 0 1-4-4V12a3 3 0 0 1 3-3z" fill="url(#g-folder)"/><path d="M0 54.500h60" stroke="#4aa6dc" stroke-width="1.200"/></svg>
    <div class="mini m1"><svg viewBox="0 0 68 54" preserveAspectRatio="none"><rect width="68" height="54" fill="#252525"/><path d="M2 4h22M30 4h12M20 12h24M20 17h14M2 9h12M2 14h11M2 19h13M2 24h12M2 29h14M20 23h30M50 25h14M2 44h11M2 49h12" stroke="#4d4d4d" stroke-width="1.300"/><path d="M0 37h68" stroke="#6d2c1f" stroke-width="3"/><rect x="60" y="10" width="5" height="2" fill="#2a74d8"/></svg><svg class="tag"><use href="#postman"/></svg></div>
    <div class="mini m2"><svg viewBox="0 0 68 72" preserveAspectRatio="none"><rect width="68" height="72" fill="#050607"/><rect width="15" height="72" fill="#152029"/><path d="M15 8h53" stroke="#1f3350" stroke-width="7"/><rect width="68" height="4" fill="#1c5bc0"/><path d="M3 7h6M3 12h5M3 17h7M3 23h7M3 28h6" stroke="#7d8b96" stroke-width="1.200"/><path d="M18 20h8M18 25h9M18 32h48M18 40h14M18 48h40M18 56h36M18 63h30" stroke="#474747" stroke-width="1.300" stroke-dasharray="4 1"/><path d="M18 35h14" stroke="#d3b16b" stroke-width="1.600"/><path d="M56 7h4" stroke="#2c78e0" stroke-width="3"/><path d="M63 7h3" stroke="#d2463f" stroke-width="3"/><path d="M0 71h15" stroke="#2bb3a5" stroke-width="2"/></svg><svg class="tag"><use href="#docker"/></svg></div>
    <div class="mini m3"><svg viewBox="0 0 72 48"><rect x=".8" y=".8" width="70.400" height="46.400" rx="3" fill="#1c1c1c" stroke="#aeb5b2" stroke-width="1.600"/><path d="M5 6h46M5 10h42M5 17h28" stroke="#d8d8d8" stroke-width="1.200" stroke-dasharray="5 .8"/><path d="M5 13h62" stroke="#5b7396" stroke-width="3"/></svg></div>
    <div class="mini m4"><svg viewBox="0 0 68 78" preserveAspectRatio="none"><rect width="68" height="78" fill="#33363a"/><rect width="19" height="78" fill="#3d4145"/><path d="M20 7h46" stroke="#4b4f54" stroke-width="3"/><path d="M0 15h18" stroke="#2e62b4" stroke-width="3"/><path d="M20 14h46" stroke="#484d53" stroke-width="5"/><path d="M3 20h7M3 25h5M3 30h5" stroke="#7e8388" stroke-width="1.200"/><rect x="21" y="63" width="14" height="12" fill="#b77bdc"/><path d="M38 66h7M38 72h7" stroke="#777" stroke-width="3"/></svg><svg class="tag"><use href="#intellij"/></svg></div>
    <svg class="trash" viewBox="0 0 52 68"><path d="M4 12l6-8 8-3 8 3 9-2 8 6 6 6-6 8H10z" fill="#e3e3e0"/><path d="M10 6l5 5-6 4zM24 4l6 6-4 5zM38 6l-4 9 8-3z" fill="#555"/><path d="M20 9l5 2-3 4z" fill="#3c8ee0"/><path d="M30 11l5 1-3 3z" fill="#e0603c"/><path d="M1 9c2 8 48 8 50 0l-7 52c-1 8-35 8-36 0z" fill="url(#g-bin)"/><path d="M1 9c2 8 48 8 50 0" fill="none" stroke="#c3c6c5" stroke-width="1.400"/></svg>
  </div>
</footer>
</body>
</html>
```
FILE: styles.css
```css
* { box-sizing: border-box; }

body {
  margin: 0;
  width: 2880px;
  height: 1800px;
  overflow: hidden;
  display: flex;
  flex-direction: column;
  font-family: "Liberation Sans", Arial, sans-serif;
  background: linear-gradient(90deg, #8b7d73, #9a8c80 40%, #5b4c40 85%, #2f2622);
}

svg { display: block; flex: none; overflow: visible; }
.defs { position: absolute; }

/* System menu bar */
.menubar {
  flex: none;
  height: 49px;
  display: flex;
  align-items: center;
  padding: 0 37px 1px 38px;
  font: 500 25.5px Inter, sans-serif;
  color: #1e1c18;
  background: linear-gradient(90deg, #d3a897 0, #d4ac99 22%, #d1b9a3 42%, #cbbfa9 56%, #c5c9b3 68%, #bfd6c0 84%, #bbe5d4 100%);
}
.apple { width: 30px; height: 32px; fill: #1e1c18; margin-bottom: 4px; }
.menus {
  display: grid;
  grid-template-columns: 143px 84px 88px 99.500px 128px 176px 132px 84px 138px 80px;
  margin-left: 38px;
  margin-bottom: 3px;
  white-space: nowrap;
  letter-spacing: -.25px;
}
.menus b { font-weight: 700; letter-spacing: -.4px; }
.status { margin-left: auto; display: flex; align-items: center; }
.s-docker { width: 38px; height: 32px; margin-top: 2px; }
.s-mem { width: 36px; height: 28px; margin-left: 44px; }
.s-bt { width: 16px; height: 26px; margin-left: 43px; }
.s-air { width: 28px; height: 28px; margin-left: 43px; }
.s-bat { width: 52px; height: 24px; margin-left: 36px; }
.s-wifi { width: 32px; height: 24px; margin-left: 36px; margin-bottom: 2px; }
.s-find { width: 26px; height: 26px; margin-left: 39px; }
.s-cc { width: 28px; height: 26px; margin-left: 37px; }
.s-siri {
  width: 28px; height: 28px; border-radius: 50%; margin-left: 34px;
  background: radial-gradient(circle at 50% 50%, #fff 0, #d9f0ff 18%, transparent 50%), conic-gradient(#4aa391, #3a6fd0, #4a6ae0, #c64fb2, #e0567e, #7a4f8a, #4aa391);
}
.clock { margin-left: 33px; margin-bottom: 3px; width: 228px; white-space: pre; letter-spacing: 0; }

/* Browser window */
.window {
  flex: none;
  height: 1638px;
  display: flex;
  flex-direction: column;
  border-radius: 20px 20px 26px 26px;
  overflow: hidden;
  background: #fff;
  border-top: 1px solid #000;
  border-bottom: 1px solid #000;
}
.tabstrip {
  flex: none;
  height: 84px;
  display: flex;
  background: #202124;
  border-top: 2px solid #5c5e61;
  border-left: 1px solid #5c5e61;
  border-right: 1px solid #5c5e61;
  border-radius: 20px 20px 0 0;
}
.lights { display: flex; gap: 16px; padding: 29px 0 0 41px; width: 186px; }
.lights i { width: 24px; height: 24px; border-radius: 50%; }
.red { background: #ee6a5f; }
.yellow { background: #f5bd4f; }
.green { background: #61c454; }
.tabs { display: grid; grid-template-columns: repeat(8, 154px) repeat(8, 152px); padding-top: 14px; }
.tab {
  position: relative;
  display: flex;
  align-items: center;
  padding-left: 15px;
  height: 68px;
  fill: #fff;
  color: #fff;
  font: 500 23.500px Inter, sans-serif;
  letter-spacing: -.2px;
}
.tab::after { content: ""; position: absolute; right: 0; top: 15px; width: 2px; height: 40px; background: #5a5c60; }
.plain::after, .hover::after, .active::after { display: none; }
.tab > svg { width: 32px; height: 32px; }
.tab > span {
  margin: 0 0 2px 16px;
  width: 80px;
  white-space: nowrap;
  -webkit-mask-image: linear-gradient(90deg, #000 60%, transparent);
  mask-image: linear-gradient(90deg, #000 60%, transparent);
}
.dim > svg { fill: #2a2f34; }
.hover, .active { border-radius: 16px 16px 0 0; }
.hover { background: #2c2d31; }
.active { background: #36373b; }
.hover::before, .active::before {
  content: "";
  position: absolute;
  left: -16px; right: -16px; bottom: 0; height: 16px;
  background:
    radial-gradient(circle at 0 0, transparent 15.500px, var(--c) 16px) left / 16px 16px no-repeat,
    radial-gradient(circle at 100% 0, transparent 15.500px, var(--c) 16px) right / 16px 16px no-repeat;
}
.hover { --c: #2c2d31; }
.active { --c: #36373b; }
.active > span { width: 38px; }
.tab > .x { width: 16px; height: 16px; margin-left: 12px; }
.plus { width: 24px; height: 24px; margin: 36px 0 0 33px; }
.chev { width: 18px; height: 12px; margin: 43px 34px 0 auto; }

.toolbar {
  flex: none;
  height: 74px;
  display: flex;
  align-items: center;
  padding: 0 16px 1px 30px;
  background: #36373b;
  border-bottom: 2px solid #5c5b5f;
  border-left: 1px solid #5c5e61;
}
.t-back, .t-fwd { width: 26px; height: 26px; }
.t-fwd { margin-left: 38px; }
.t-reload { width: 28px; height: 28px; margin-left: 37px; }
.omnibox {
  width: 2199px;
  height: 56px;
  margin-left: 31px;
  padding: 0 21px 0 21px;
  border-radius: 28px;
  background: #202124;
  display: flex;
  align-items: center;
}
.o-info { width: 28px; height: 28px; }
.url { margin-left: 18px; margin-right: auto; font: 27px Inter, sans-serif; letter-spacing: .55px; color: #fff; }
.url em { font-style: normal; color: #8e9196; }
.o-zoom { width: 28px; height: 28px; }
.o-share { width: 22px; height: 28px; margin-left: 39px; }
.o-star { width: 30px; height: 29px; margin-left: 38px; margin-bottom: 2px; }
.t-ext { width: 29px; height: 29px; margin-left: 30px; }
.t-leaf { width: 29px; height: 28px; margin-left: 34px; }
.t-panel { width: 28px; height: 28px; margin-left: 36px; }
.avatar {
  width: 44px; height: 44px; border-radius: 50%; margin-left: 28px;
  background: #df742c; color: #fff; font: 23px/44px Inter, sans-serif; text-align: center;
}
.update {
  width: 175px; height: 56px; margin-left: 14px; padding: 0 22px 0 23px;
  display: flex; align-items: center; justify-content: space-between;
  border: 3px solid #efb1aa; border-radius: 28px; background: #473f43;
  font: 500 25.500px Inter, sans-serif; letter-spacing: .1px; color: #efb1aa; fill: #efb1aa;
}
.update svg { width: 6px; height: 26px; }

/* Checkout page */
.page {
  flex: 1;
  position: relative;
  padding: 0 58px;
  background: #fff;
}
.page::after {
  content: "";
  position: absolute;
  left: 0; right: 0; bottom: 0; height: 60px;
  background: linear-gradient(transparent, rgba(0, 0, 0, .1));
  -webkit-mask-image: linear-gradient(90deg, transparent 1%, #000 8%, #000 92%, transparent 99%);
  mask-image: linear-gradient(90deg, transparent 1%, #000 8%, #000 92%, transparent 99%);
}
.container {
  height: 1414px;
  padding: 45px 36px 0 35.400px;
  background: #f2f2f2;
  border: 1px solid #d0d0d0;
  border-radius: 5px;
}
.row { display: grid; grid-template-columns: 1fr 1fr; gap: 57.600px; }
h3 { margin: 0 0 37px; font-size: 35.800px; line-height: 39px; padding-bottom: 1px; }
label { display: flex; align-items: center; height: 35px; font-size: 30.600px; line-height: 35px; }
.group { margin-bottom: 36.200px; }
.input {
  margin-top: 18px;
  height: 73px;
  padding-left: 21.500px;
  border: 1px solid #ccc;
  border-radius: 5px;
  background: #fff;
  font-size: 24px;
  line-height: 70px;
}
.pair { display: grid; grid-template-columns: 1fr 1fr; gap: 57.600px; }
label svg { fill: #000; }
.i-user { width: 22px; height: 26px; margin-right: 8px; }
.i-card { width: 35px; height: 26px; margin-right: 7px; }
.i-bank { width: 33px; height: 30px; margin: -3px 10px 0 0; }
.i-mail { width: 31px; height: 25px; margin-right: 8px; }
.accepted { height: 163px; }
.cards { display: flex; gap: 11.500px; margin-top: 36px; }
.cards svg { width: 56px; height: 37px; overflow: hidden; }
.btn {
  display: block;
  width: 100%;
  height: 78px;
  margin: 18.500px 0 0;
  padding: 0;
  border: 0;
  border-radius: 5px;
  background: #67ab5b;
  color: #fff;
  font: 30.600px "Liberation Sans", Arial, sans-serif;
}
.message { margin: 88px 0 0; text-align: center; font-size: 30.600px; line-height: 35px; }

/* Desktop and dock */
.desk {
  flex: 1;
  position: relative;
  display: flex;
  flex-direction: column;
  align-items: center;
  background:
    linear-gradient(115deg, transparent 30px, #8a7568 34px, transparent 44px, transparent 64px, #94806f 70px, transparent 84px),
    linear-gradient(90deg, #a99b8f 0, #bdb0a4 4%, #d4cac1 30%, #cbbfb6 50%, #b3a08c 65%, #a08d7b 80%, #54463d 92%, #2b221e 98%);
}
.behind {
  width: 2364px;
  height: 6px;
  align-self: flex-end;
  background: linear-gradient(90deg, #1d4434 0, #1d4434 58px, #1c3a60 60px, #1a3556 60%, #1f5482 100%);
  border-bottom: 1px solid #000;
  border-radius: 0 0 10px 10px;
}
.dock {
  margin-top: 2px;
  width: 2740px;
  height: 96px;
  padding: 0 17px 0 14px;
  display: flex;
  align-items: flex-start;
  border: 1px solid #47403a;
  border-radius: 26px;
  box-shadow: inset 0 0 0 2px rgba(255, 255, 255, .2);
  background: linear-gradient(90deg, #7f756c 0, #7a705f 15%, #777069 30%, #827c76 42%, #786a5e 52%, #716050 60%, #63543f 70%, #5f5145 80%, #544942 92%, #574b44 100%);
}
.app { position: relative; width: 58px; height: 58px; margin: 15px 18px 0 0; }
.app > svg { width: 58px; height: 58px; filter: drop-shadow(0 1px 1px rgba(0, 0, 0, .35)); }
.app.on::after {
  content: ""; position: absolute; left: 25px; top: 67px;
  width: 8px; height: 8px; border-radius: 50%; background: #f4e9dc;
}
.badge {
  position: absolute; right: -7px; top: -10px;
  width: 27px; height: 27px; border-radius: 50%;
  background: #e5503f; color: #fff; text-align: center;
  font: 16px/27px Inter, sans-serif;
}
.rule { width: 2px; height: 70px; margin-top: 12px; background: #a1968b; }
.r1 { margin-left: 7px; margin-right: 25px; }
.r2 { margin-left: 9px; margin-right: 21px; }
.folder { width: 60px; height: 60px; margin-top: 14px; }
.mini { position: relative; }
.mini > svg { width: 100%; height: 100%; }
.mini > .tag { position: absolute; right: 2px; width: 22px; height: 22px; }
.m1 { width: 68px; height: 38px; margin: 25px 0 0 13px; }
.m2 { width: 68px; height: 51px; margin: 19px 0 0 8px; }
.m3 { width: 72px; height: 48px; margin: 20px 0 0 6px; }
.m4 { width: 68px; height: 55px; margin: 17px 0 0 6px; }
.m1 > .tag { bottom: -13px; }
.m2 > .tag { bottom: -6px; right: 1px; }
.m4 > .tag { bottom: -4px; }
.trash { width: 52px; height: 67px; margin: 9px 0 0 16px; }
```
